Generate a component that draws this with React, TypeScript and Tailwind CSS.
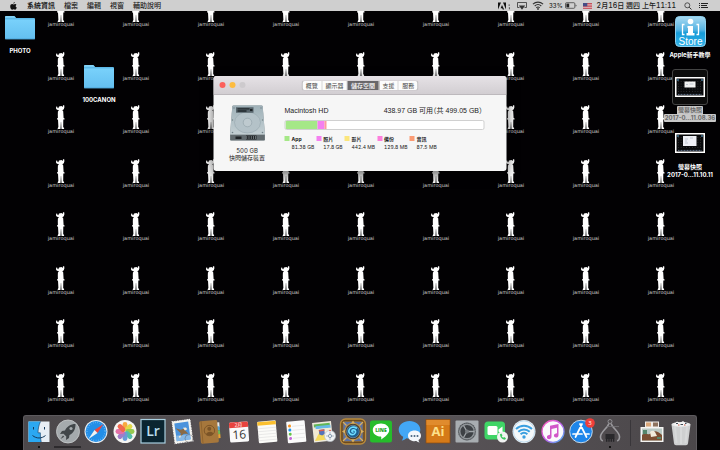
import type { ReactNode } from "react";

const menus = ["檔案", "編輯", "視窗", "輔助說明"];

const tabs = ["概覽", "顯示器", "儲存空間", "支援", "服務"];

const usage = [
  { name: "App", size: "81.38 GB", color: "bg-[#a5e887]" },
  { name: "照片", size: "17.8 GB", color: "bg-[#f480f0]" },
  { name: "影片", size: "442.4 MB", color: "bg-[#fbe67c]" },
  { name: "備份", size: "129.8 MB", color: "bg-[#fd7fdc]" },
  { name: "音訊", size: "87.5 MB", color: "bg-[#fb9c74]" },
];

/* WALLPAPER */

function Wallpaper() {
  return (
    <div
      aria-hidden="true"
      className="absolute inset-x-0 -top-[2px] grid h-[428px] grid-cols-[repeat(auto-fill,75px)] grid-rows-8 justify-center overflow-hidden"
    >
      {Array.from({ length: 72 }, (_, i) => (
        <div key={i} className="flex flex-col items-center">
          <svg viewBox="0 0 16 24" className="h-6 w-4" fill="#fff">
            <path d="M4.200 1.500 5.300 1.700 5.500 3.100 6.300 3.300 7 1.400 9.500 1.100 10.700 2 11 .300 12.200 .200 12.400 2.200 11.800 4.200 10.700 4.900 10.400 5.400 11.200 6.200 11.400 9.500 11.600 13 12.600 13.600 12.500 14.600 11.300 14.600 11.200 22 12.200 23.200 12 24H9.500L9.100 17 8.900 17 8.500 24H5.800L5.700 23.200 6.400 22 6 14.600 5 14.600 5 13.600 5.900 13 5.800 9.500 5.900 6.400 6.800 5.500 6.500 4.900 4.900 4.700 4 3.400Z" />
          </svg>
          <span className="pl-0.5 font-['DejaVu_Sans',sans-serif] text-[5px] leading-1 text-[#d0d0d0]">
            jamiroquai
          </span>
        </div>
      ))}
    </div>
  );
}

/* MENU BAR */

function AppleLogo() {
  return (
    <svg viewBox="0 0 16 18" className="h-2 w-[7px]" fill="#111">
      <path d="M11 0c.2 1.700-1.300 3.700-3.100 3.700C7.600 2 9.300.300 11 0ZM14.800 6.200c-2.800 1.700-2.300 5.200.700 6.400-.700 2-2.200 4.800-3.900 4.900-1.300 0-1.800-.8-3.300-.8s-2 .8-3.200.8C2.700 17.400.500 13.300.500 9.900c0-3.600 2.300-5.500 4.400-5.500 1.400 0 2.500.9 3.400.9.800 0 2.200-1 3.900-1 1 .1 2 .6 2.600 1.900Z" />
    </svg>
  );
}

function MenuBar() {
  return (
    <header className="relative flex h-[11px] items-center justify-between bg-[#cfcfcf] pr-[11px] pl-2.5 text-[7px] leading-[11px] text-[#1c1c1c] tabular-nums">
      <nav className="flex items-center gap-[9px]">
        <button aria-label="Apple" className="w-2">
          <AppleLogo />
        </button>
        <button className="font-bold">系統資訊</button>
        {menus.map((menu) => (
          <button key={menu} className="font-medium">
            {menu}
          </button>
        ))}
      </nav>
      <div className="flex items-center gap-[5px] font-medium">
        <svg viewBox="0 0 14 8" className="h-2 w-3.5" fill="#111">
          <path d="M0 .500h3L0 7.500ZM5 .500h3v7ZM4 3 6.200 7.500H4.700L4.200 6.200H2.600Z" />
          <path d="M10.500 2.500h1.400v1.200h-1.400ZM10.800 5.200h1.200v1.600l-1 1Z" opacity=".6" />
        </svg>
        <svg viewBox="0 0 10 8" className="h-2 w-2.5">
          <path d="M2.500 5.500H.500v-5h9v5h-2" fill="none" stroke="#333" strokeWidth=".8" />
          <path d="M5 7.800 8.200 3.600H1.800Z" fill="#333" />
        </svg>
        <svg viewBox="0 0 12 9" className="h-[9px] w-3" fill="none" stroke="#333" strokeWidth="1.1">
          <path d="M.900 3.200c3-2.800 7.200-2.800 10.200 0M2.700 5c2-1.800 4.600-1.800 6.600 0M4.300 6.700c1.100-.9 2.300-.9 3.400 0" />
          <circle cx="6" cy="7.900" r=".4" />
        </svg>
        <span className="-mr-[3px] text-[6px]">33%</span>
        <svg viewBox="0 0 12 7" className="h-[7px] w-3">
          <rect x=".5" y=".7" width="9.300" height="5.600" rx="1" fill="none" stroke="#333" strokeWidth=".7" />
          <path d="M1.400 1.600h2.800v3.800H1.400Z" fill="#222" />
          <path d="M10.600 2.400c1.200.2 1.200 2 0 2.200Z" fill="#333" />
        </svg>
        <svg viewBox="0 0 9 6" className="ml-px h-1.5 w-[9px]">
          <path d="M0 0h9v6H0Z" fill="#e9c9cc" />
          <path d="M0 .5h9M0 2.100h9M0 3.700h9M0 5.400h9" stroke="#c0434e" strokeWidth=".9" />
          <path d="M0 0h4.300v3.300H0Z" fill="#454c85" />
        </svg>
        <span>2月16日 週四 上午11:11</span>
        <button aria-label="Spotlight" className="ml-[3px]">
          <svg viewBox="0 0 8 8" className="size-2" fill="none" stroke="#333">
            <circle cx="3.300" cy="3.300" r="2.500" strokeWidth=".8" />
            <path d="m5.200 5.200 2.300 2.300" />
          </svg>
        </button>
        <button aria-label="通知中心" className="ml-0.5">
          <svg viewBox="0 0 10 7" className="h-[7px] w-2.5" stroke="#222">
            <path d="M0 1.500h1M2 1.500h7M0 3.500h1M2 3.500h6M0 5.500h1M2 5.500h7" />
          </svg>
        </button>
      </div>
    </header>
  );
}

/* DESKTOP ITEMS */

function Folder() {
  return (
    <svg viewBox="0 0 30 24" className="h-6 w-[30px]">
      <defs>
        <linearGradient id="folder" x1="0" y1="0" x2="0" y2="1">
          <stop offset="0" stopColor="#79d1fb" />
          <stop offset="1" stopColor="#63bff0" />
        </linearGradient>
      </defs>
      <path d="M0 1.200Q0 0 1.200 0H8.500Q9.500 0 10.300 1L11 2H29q1 0 1 1v3H0Z" fill="#5db9e8" />
      <path d="M0 1.200Q0 0 1.200 0H8.500Q9.500 0 10.300 1L11 1.800H0Z" fill="#84d3f7" />
      <path d="M0 3.500H30V22.500q0 .7-.7.700H.700Q0 23.200 0 22.500Z" fill="url(#folder)" />
      <path d="M0 22.800H30" stroke="#4aa5d8" strokeWidth=".7" />
    </svg>
  );
}

function StoreIcon() {
  return (
    <svg viewBox="0 0 31 31" className="size-[31px]">
      <defs>
        <linearGradient id="store" x1="0" y1="0" x2="0" y2="1">
          <stop offset="0" stopColor="#a8daf2" />
          <stop offset=".45" stopColor="#55b3e2" />
          <stop offset=".55" stopColor="#159bd8" />
          <stop offset="1" stopColor="#35b3e8" />
        </linearGradient>
      </defs>
      <rect x=".5" y=".5" width="30" height="30" rx="4" fill="url(#store)" stroke="#8fd0ee" />
      <circle cx="15.500" cy="5.500" r="2.800" fill="#fff" />
      <path d="M12.500 10H18V17h1.500v2.500H11.500V17H13V12h-.5Z" fill="#fff" />
      <path d="M9.500 8.500H7.500v10h2M21.500 8.500h2v10h-2" fill="none" stroke="#fff" strokeWidth="1.300" />
      <text x="15.500" y="28.500" fontSize="10" fontWeight="400" textAnchor="middle" fill="#fff" className="font-['Liberation_Sans',sans-serif]">
        Store
      </text>
    </svg>
  );
}

function Screenshot({ menu = false }: { menu?: boolean }) {
  return (
    <svg viewBox="0 0 30 20" className="h-5 w-[30px]">
      <rect width="30" height="20" fill="#fff" />
      <rect x="1.500" y="1.500" width="27" height="17" fill="#08090b" />
      <path d="M3 4.500h24M3 7h24M3 9.500h24M3 12h24M3 14.500h24" stroke="#666" strokeWidth=".6" strokeDasharray=".6 2.200" />
      <path d="M3 17.400h24" stroke="#63758c" strokeWidth="1" strokeDasharray="1 .5" />
      <path d="M2 3h2M26 3h2" stroke="#5aa9d6" />
      {menu ? (
        <path d="M8 3h13.500v10H8Z" fill="#eef0f6" />
      ) : (
        <path d="M9.500 4.500h11v6h-11Z" fill="#f3f3f3" />
      )}
      <path d={menu ? "M10 6h3M10 8h2M10 10h3M15 5h3" : "M11 7.500h2M14.500 7h4"} stroke="#b6bccb" strokeWidth=".8" />
    </svg>
  );
}

function DesktopItem({ className, icon, children }: { className: string; icon: ReactNode; children: ReactNode }) {
  return (
    <button
      className={`absolute flex w-14 flex-col items-center text-[6px] leading-2 font-bold whitespace-nowrap text-white ${className}`}
    >
      {icon}
      {children}
    </button>
  );
}

/* STORAGE WINDOW */

function HardDisk() {
  return (
    <svg viewBox="0 0 36 36" className="size-9">
      <defs>
        <linearGradient id="disk" x1="0" y1="0" x2="0" y2="1">
          <stop offset="0" stopColor="#9fb1b8" />
          <stop offset="1" stopColor="#c3cfd3" />
        </linearGradient>
      </defs>
      <path d="M4 .500H32q1 0 1.200 1L35.500 30v4.500q0 1.300-1.300 1.300H1.800Q.500 35.800.500 34.500V30L2.800 1.500Q3 .5 4 .5Z" fill="#7d878b" />
      <path d="M4 .500H32q1 0 1.200 1L35.500 29.500H.500L2.800 1.500Q3 .5 4 .5Z" fill="url(#disk)" />
      <ellipse cx="18" cy="17.500" rx="13" ry="10.500" fill="#b4c2c8" stroke="#93a3aa" strokeWidth=".5" />
      <circle cx="18" cy="17.500" r="4.300" fill="#becacf" stroke="#8e9fa6" strokeWidth=".6" />
      <path d="M6.500 2.300H24V7.800H6.500Z" fill="#56636a" />
      <path d="M8 3.800H20M8 6H17" stroke="#20282c" strokeWidth="1.300" />
      <path d="M20.500 4h2.500v2h-2.500Z" fill="#1c2226" />
      <g fill="#718087">
        <circle cx="4.500" cy="3" r=".7" />
        <circle cx="31.500" cy="3" r=".7" />
        <circle cx="3" cy="15" r=".7" />
        <circle cx="33" cy="15" r=".7" />
        <circle cx="3" cy="27.500" r=".8" />
        <circle cx="33" cy="27.500" r=".8" />
      </g>
      <path d="M1 30h34v5H1Z" fill="#626b6f" />
      <path d="M6 31.500h6v2.500H6ZM16.500 30.500H27v4H16.500Z" fill="#202427" />
      <path d="M17 32.500h9.500" stroke="#9aa3a7" strokeWidth="3" strokeDasharray=".6 1.600" />
    </svg>
  );
}

function StorageWindow() {
  return (
    <section
      aria-label="儲存空間"
      className="absolute top-[65px] left-1/2 w-[293px] -translate-x-1/2 overflow-hidden rounded-[3px] bg-[#f6f6f6] text-[#222] tabular-nums shadow-[0_4px_12px_rgba(0,0,0,0.6)]"
    >
      <div className="relative flex h-[19px] items-center justify-center border-b border-[#bdb9bd] bg-linear-to-b from-[#e6e2e6] to-[#d2ced2]">
        <div className="absolute left-1.5 flex gap-1">
          <button aria-label="關閉" className="size-1.5 rounded-full bg-[#fc605b]" />
          <button aria-label="縮到最小" className="size-1.5 rounded-full bg-[#fdbc40]" />
          <button aria-label="縮放" disabled className="size-1.5 rounded-full bg-[#cdcacd]" />
        </div>
        <div className="flex w-[115px] divide-x divide-[#d5d5d5] overflow-hidden rounded-[2px] bg-[#fcfcfc] text-[6px] leading-[9px] shadow-[0_0_1px_#999]">
          {tabs.map((tab) => (
            <button
              key={tab}
              className={`flex-auto ${tab === "儲存空間" ? "bg-[#69676a] font-medium text-white" : "text-[#444]"}`}
            >
              {tab}
            </button>
          ))}
        </div>
      </div>

      <div className="flex gap-[18px] pt-2.5 pr-[22px] pb-2.5 pl-3.5">
        <div className="flex w-[39px] flex-col items-center text-[6px] leading-[7px] whitespace-nowrap">
          <HardDisk />
          <span className="mt-1.5">500 GB</span>
          <span>快閃儲存裝置</span>
        </div>

        <div className="flex-1">
          <div className="flex justify-between pr-0.5 font-['Liberation_Sans','Noto_Sans_CJK_TC',sans-serif] text-[7px] leading-3">
            <h1>Macintosh HD</h1>
            <p className="[font-feature-settings:'halt']">438.97 GB 可用（共 499.05 GB）</p>
          </div>
          <div className="mt-[3px] flex h-2.5 overflow-hidden rounded-[2px] border border-[#d0d0d0] bg-white">
            <div className="bg-[#a5e887]" style={{ width: "16.300%" }} />
            <div className="bg-[#f480f0]" style={{ width: "3.600%" }} />
            <div className="bg-[#fb9c9c]" style={{ width: "0.600%" }} />
          </div>
          <ul className="mt-[5px] flex gap-0.5 text-[5px] leading-2">
            {usage.map((item) => (
              <li key={item.name} className="flex gap-0.5">
                <span className={`mt-px size-[5px] ${item.color}`} />
                <div>
                  <p className="font-bold">{item.name}</p>
                  <p>{item.size}</p>
                </div>
              </li>
            ))}
          </ul>
        </div>
      </div>
    </section>
  );
}

/* DOCK */

const dockApps: { name: string; icon: ReactNode; running?: boolean }[] = [
  {
    name: "Finder",
    running: true,
    icon: (
      <>
        <path d="M3.500 3.500h21v20.500h-21Z" fill="#e7eef5" />
        <path d="M3.500 3.500H15.500C13.800 7 13 11 13 14.800h2.300c0 3.500.2 6.500.9 9.200H3.500Z" fill="#2ba8f2" />
        <path d="M15.500 3.500C13.800 7 13 11 13 14.800h2.300c0 3.500.2 6.500.9 9.200" fill="none" stroke="#1d4c77" strokeWidth=".7" />
        <path d="M8.500 9v2.500M19.500 9v2.500M7.500 17.500c4 3.300 9 3.300 13 0" fill="none" stroke="#153a5c" strokeWidth="1" />
      </>
    ),
  },
  {
    name: "Launchpad",
    icon: (
      <>
        <circle cx="14" cy="13.500" r="11.500" fill="#a5aaad" stroke="#c9cccd" strokeWidth=".8" />
        <path d="M21.500 6c-5 0-8.500 2.500-10.500 6.500L8 13l-2 3 3.500-.3 2.800 2.800L12 22l3-2 .5-3C19.500 15 21.700 11 21.500 6ZM9 17.500 6.500 21l3.700-2.300Z" fill="#414649" />
        <circle cx="17" cy="10.500" r="1.600" fill="#a5aaad" />
      </>
    ),
  },
  {
    name: "Safari",
    icon: (
      <>
        <circle cx="14" cy="13.500" r="11.500" fill="#e9edf0" />
        <circle cx="14" cy="13.500" r="10.500" fill="#238fe8" />
        <circle cx="14" cy="13.500" r="9" fill="none" stroke="#9bd0f7" strokeWidth="1.300" strokeDasharray=".4 1.900" />
        <path d="m21.500 6-6 9-3-3Z" fill="#f0443b" />
        <path d="m6.500 21 6-9 3 3Z" fill="#f2f2f2" />
      </>
    ),
  },
  {
    name: "照片",
    icon: (
      <>
        <circle cx="14" cy="13.500" r="11.500" fill="#f5f5f3" />
        <g opacity=".9">
          <rect x="11.600" y="4" width="4.800" height="9" rx="2.400" fill="#f9a12c" />
          <rect x="11.600" y="4" width="4.800" height="9" rx="2.400" fill="#e2d638" transform="rotate(45 14 13.500)" />
          <rect x="11.600" y="4" width="4.800" height="9" rx="2.400" fill="#8cc63f" transform="rotate(90 14 13.500)" />
          <rect x="11.600" y="4" width="4.800" height="9" rx="2.400" fill="#43b9a2" transform="rotate(135 14 13.500)" />
          <rect x="11.600" y="4" width="4.800" height="9" rx="2.400" fill="#5b93d6" transform="rotate(180 14 13.500)" />
          <rect x="11.600" y="4" width="4.800" height="9" rx="2.400" fill="#9771c4" transform="rotate(225 14 13.500)" />
          <rect x="11.600" y="4" width="4.800" height="9" rx="2.400" fill="#e0629f" transform="rotate(270 14 13.500)" />
          <rect x="11.600" y="4" width="4.800" height="9" rx="2.400" fill="#f0593e" transform="rotate(315 14 13.500)" />
        </g>
      </>
    ),
  },
  {
    name: "Lightroom",
    icon: (
      <>
        <rect x="2" y="1.500" width="24" height="23.500" fill="#0b2531" stroke="#a9cfe0" strokeWidth="1.200" />
        <text x="14" y="18" fontSize="14" fontWeight="600" textAnchor="middle" fill="#b9deee">
          Lr
        </text>
      </>
    ),
  },
  {
    name: "Mail",
    icon: (
      <>
        <g transform="rotate(-8 14 13.500)">
          <rect x="5.500" y="2.500" width="18" height="22" fill="#f3f3ee" stroke="#fff" strokeWidth="1" strokeDasharray="1 .7" />
          <path d="M7.500 4.500h14v18h-14Z" fill="#4b93dc" />
          <path d="M7.500 17h14v5.500h-14Z" fill="#86b8e6" />
          <path d="m8 9.500 5 2 3-.5 4 5.500-4.500-.5-4 2.500 1-3.500Z" fill="#8a6a45" />
          <path d="m15.500 10 3 0 1 2-2.500 1ZM10 18l3-1-2 3Z" fill="#f2ead8" />
        </g>
        <circle cx="21" cy="20.500" r="4" fill="none" stroke="#4c4a4f" strokeWidth="1" opacity=".4" />
      </>
    ),
  },
  {
    name: "通訊錄",
    icon: (
      <g transform="rotate(-5 14 13.500)">
        <path d="M20 5h4v5h-4Z" fill="#e8e8e8" />
        <path d="M20 9h4v4h-4Z" fill="#54a7dc" />
        <path d="M20 13h4v4h-4Z" fill="#70bb54" />
        <path d="M20 17h4v4h-4Z" fill="#e6a535" />
        <rect x="4" y="2.500" width="18" height="22.500" rx="1.500" fill="#a6773c" />
        <path d="M6 2.500v22.500" stroke="#8a5f2c" strokeWidth=".8" />
        <circle cx="13.500" cy="12.500" r="5.200" fill="none" stroke="#7b5427" strokeWidth=".9" />
        <circle cx="13.500" cy="10.800" r="2" fill="#7b5427" />
        <path d="M9.800 16c1-3 6.400-3 7.400 0-2 2.200-5.400 2.200-7.400 0Z" fill="#7b5427" />
      </g>
    ),
  },
  {
    name: "行事曆",
    icon: (
      <g transform="rotate(-4 14 13.500)">
        <rect x="4.500" y="4" width="19" height="20" rx="1.500" fill="#fafafa" />
        <path d="M4.500 9.500V5.500Q4.500 4 6 4H22q1.500 0 1.500 1.500v4Z" fill="#e8433e" />
        <text x="14" y="8.700" fontSize="5" textAnchor="middle" fill="#fff">
          2月
        </text>
        <text x="14" y="20.800" fontSize="12" textAnchor="middle" fill="#333">
          16
        </text>
      </g>
    ),
  },
  {
    name: "備忘錄",
    icon: (
      <g transform="rotate(-5 14 13.500)">
        <rect x="5" y="3" width="18.500" height="21.500" rx="1" fill="#fbfbf8" />
        <path d="M5 7V3.500h18.500V7Z" fill="#fbc02f" />
        <path d="M5 10h18.500M5 13h18.500M5 16h18.500M5 19h18.500M5 22h18.500" stroke="#ddd" strokeWidth=".6" />
      </g>
    ),
  },
  {
    name: "提醒事項",
    icon: (
      <g transform="rotate(-5 14 13.500)">
        <rect x="5" y="3" width="18.500" height="21.500" rx="1" fill="#fbfbfb" />
        <path d="M10.500 8h12M10.500 12h12M10.500 16h12M10.500 20h12" stroke="#ddd" strokeWidth=".6" />
        <circle cx="8" cy="7.500" r="1.500" fill="#f8931f" />
        <circle cx="8" cy="11.500" r="1.500" fill="#2196f3" />
        <circle cx="8" cy="15.700" r="1.500" fill="#63c446" />
        <circle cx="8" cy="20" r="1.500" fill="#c368d8" />
      </g>
    ),
  },
  {
    name: "地圖",
    icon: (
      <>
        <g transform="rotate(-6 13 13.500)">
          <rect x="3" y="4" width="19" height="19.500" fill="#eeeadd" />
          <path d="M4.500 5.500h16v3h-16Z" fill="#62b657" />
          <path d="M6 7.500h15v3H6Z" fill="#68b9e8" />
          <path d="M4 10.500h16v11.500H4Z" fill="#f3ead2" />
          <path d="m4 22 6-9 9 9Z" fill="#f5d95a" />
          <path d="M9 11.500h5.500v4.500l-2.700 1.500L9 16Z" fill="#5673b9" />
          <path d="M9 11.500h5.500V13H9Z" fill="#d95d4f" />
        </g>
        <circle cx="20" cy="18" r="5.500" fill="#f2f4f6" stroke="#b9c1c8" strokeWidth=".7" />
        <path d="M20 14v2M20 20v2M16 18h2M22 18h2" stroke="#8796a4" strokeWidth=".6" />
        <circle cx="20" cy="18" r="1.600" fill="none" stroke="#6d86a0" strokeWidth=".8" />
        <circle cx="20" cy="12.500" r=".8" fill="#e6503f" />
      </>
    ),
  },
  {
    name: "Hearthstone",
    icon: (
      <>
        <rect x="1.500" y="1" width="25" height="25" rx="5" fill="#6b4a1f" stroke="#b98a3c" strokeWidth="1.400" />
        <rect x="4" y="3.500" width="20" height="20" rx="2" fill="#5a72a8" stroke="#8a6a35" strokeWidth=".8" />
        <circle cx="14" cy="13.500" r="8.300" fill="#4b3c28" stroke="#b98f49" strokeWidth="1.300" />
        <path d="m14 2.500 2 3h-4ZM14 24.500l2-3h-4ZM3 13.500l3-2v4ZM25 13.500l-3-2v4Z" fill="#d9b061" />
        <circle cx="14" cy="13.500" r="6.300" fill="#1d5f90" stroke="#8aa0b0" strokeWidth=".6" />
        <path d="M14 14c-1.500 0-1.500-2 .3-2.200 2.500-.2 3.300 3.200.7 4.400-3.200 1.300-6-1.500-5-4.200 1-2.900 4.800-3.700 7.300-2" fill="none" stroke="#6fdcff" strokeWidth="1.700" strokeLinecap="round" />
        <path d="m4 4 3.500 3.500M24 4l-3.500 3.500M4 23l3.500-3.500M24 23l-3.500-3.500" stroke="#d9b061" strokeWidth="1.300" />
      </>
    ),
  },
  {
    name: "LINE",
    icon: (
      <>
        <rect x="3" y="2.500" width="22" height="22" rx="2.500" fill="#26bd2b" />
        <path d="M14 5.500c4.700 0 8.200 2.900 8.200 6.500 0 3.800-4.500 7-8 9.500.2-1.500.2-2.700-.4-2.900C9 18.300 5.800 15.700 5.800 12c0-3.600 3.500-6.500 8.200-6.500Z" fill="#fff" />
        <text x="14" y="13.800" fontSize="5" fontWeight="800" textAnchor="middle" fill="#26a52b">
          LINE
        </text>
      </>
    ),
  },
  {
    name: "訊息",
    icon: (
      <>
        <path d="M13.500 3c6 0 10.800 3.800 10.800 8.800s-4.800 8.800-10.800 8.800c-1 0-2-.1-3-.3-1.200 1.200-3 2-4.800 2.200.9-1 1.500-2.400 1.400-3.700C4.400 17.200 2.700 14.600 2.700 11.800 2.700 6.800 7.500 3 13.500 3Z" fill="#43a7f5" />
        <path d="M18.500 12.500c3.800 0 6.500 2.200 6.500 5.200 0 1.800-1 3.300-2.500 4.200 0 1 .4 2 1.200 2.700-1.300-.1-2.500-.6-3.400-1.500-5 .8-8.300-2-8.300-5.400 0-3 2.700-5.200 6.500-5.200Z" fill="#f3f7fb" />
        <g fill="#48647f">
          <circle cx="15.500" cy="18" r="1" />
          <circle cx="18.500" cy="18" r="1" />
          <circle cx="21.500" cy="18" r="1" />
        </g>
      </>
    ),
  },
  {
    name: "Illustrator",
    icon: (
      <>
        <rect x="2" y="1.500" width="24" height="23.500" fill="#d57a18" stroke="#8c4b10" strokeWidth=".7" />
        <path d="M2.500 2h23v5h-23Z" fill="#e08b2d" />
        <text x="14" y="18" fontSize="13" fontWeight="700" textAnchor="middle" fill="#fde08a">
          Ai
        </text>
      </>
    ),
  },
  {
    name: "系統偏好設定",
    icon: (
      <>
        <rect x="2.500" y="2.500" width="23" height="22" rx="1" fill="#a8adb1" />
        <circle cx="14" cy="13.500" r="9" fill="#3d4145" />
        <circle cx="14" cy="13.500" r="7.300" fill="none" stroke="#8f9498" strokeWidth="1.500" />
        <circle cx="14" cy="13.500" r="8.600" fill="none" stroke="#8f9498" strokeWidth="1" strokeDasharray="1 1" />
        <path d="M14 13.500h7M14 13.500l-3.500-6M14 13.500l-3.500 6" stroke="#a0a5a9" strokeWidth="1.300" />
        <circle cx="14" cy="13.500" r="2" fill="#777c80" />
      </>
    ),
  },
  {
    name: "FaceTime",
    icon: (
      <>
        <rect x="2.500" y="3.500" width="20.500" height="18" rx="3.500" fill="#3fd566" />
        <rect x="5.500" y="8" width="10" height="9" rx="1.500" fill="#fff" />
        <path d="m16.500 11.500 4-3v8l-4-3Z" fill="#fff" />
        <circle cx="20.500" cy="19" r="5.500" fill="#f1f3f2" />
        <path d="M18 16.300c0 3 2.300 5.300 5 5.400l1-1.400-1.900-1.200-.9.700c-.8-.4-1.200-1-1.400-1.600l.7-.9-1.200-1.800Z" fill="#3cc860" />
      </>
    ),
  },
  {
    name: "AirPort 工具程式",
    icon: (
      <>
        <circle cx="14" cy="13.500" r="11.500" fill="#e9eff3" />
        <circle cx="14" cy="13.500" r="10.600" fill="#f4f8fa" stroke="#8fc3e6" strokeWidth=".5" />
        <path d="M6 11c4.600-4.500 11.400-4.500 16 0M8.300 13.700c3.300-3.100 8.100-3.100 11.400 0M10.600 16.300c2-1.800 4.800-1.800 6.800 0" fill="none" stroke="#3a9fe0" strokeWidth="2" />
        <circle cx="14" cy="19" r="1.700" fill="#3a9fe0" />
      </>
    ),
  },
  {
    name: "iTunes",
    icon: (
      <>
        <defs>
          <linearGradient id="itunes" x1="0" y1="0" x2="1" y2="1">
            <stop offset="0" stopColor="#fb5bb5" />
            <stop offset=".5" stopColor="#c25ce8" />
            <stop offset="1" stopColor="#3fb6f2" />
          </linearGradient>
        </defs>
        <circle cx="14" cy="13.500" r="11" fill="#fafafc" stroke="url(#itunes)" strokeWidth="1.300" />
        <path d="M11 7.800 19.500 6v11c0 3.400-4.600 3.200-4.600.6 0-1.700 1.500-2.100 3.100-2.400V9.700l-5.500 1.200v7.700c0 3.400-4.600 3.200-4.600.6 0-1.700 1.500-2.100 3.100-2.400Z" fill="#d256c9" />
      </>
    ),
  },
  {
    name: "App Store",
    icon: (
      <>
        <circle cx="14" cy="13.500" r="11.300" fill="#1e86ea" stroke="#d5e2ec" strokeWidth=".9" />
        <path d="m15 6-6.500 13M13 6l6.500 13M6 16h9M18 16h4" stroke="#fff" strokeWidth="1.700" strokeLinecap="round" />
        <circle cx="23" cy="5" r="4.800" fill="#ef3e3a" />
        <text x="23" y="7.200" fontSize="6" textAnchor="middle" fill="#fff">
          3
        </text>
      </>
    ),
  },
  {
    name: "系統資訊",
    running: true,
    icon: (
      <>
        <circle cx="14" cy="3.500" r="2" fill="none" stroke="#908f93" strokeWidth="1" />
        <path d="M13 5.500C11 11 4 14 4.500 19.500c0 1.800.8 2.800 2.300 3.500M15 5.500c2 5.500 9 8.500 8.500 14 0 1.800-.8 2.800-2.300 3.500" fill="none" stroke="#9b9a9e" strokeWidth="1.600" />
        <path d="M10.500 8.500h7M18 8.500h5" stroke="#77767a" strokeWidth=".8" />
        <path d="M9.500 16h9v5h-9Z" fill="#29282b" />
        <path d="M10 22.300h8.500" stroke="#252427" strokeWidth="3" strokeDasharray="1.400 .9" />
      </>
    ),
  },
];

const dockPlaces: { name: string; icon: ReactNode }[] = [
  {
    name: "下載項目",
    icon: (
      <>
        <path d="M7 1.500h14v8H7Z" fill="#efece8" />
        <path d="M8 2.500h5v4H8Z" fill="#d9a77a" />
        <path d="M15 2.500h5v4h-5Z" fill="#8d725e" />
        <path d="M2.500 7h23v15h-23Z" fill="#f4f4f2" />
        <path d="M4 8.500h20v12H4Z" fill="#b9c9c4" />
        <path d="M4 15c4-3 6 1 9-2s7-2 11 2v5.500H4Z" fill="#7b4f33" />
        <path d="M12 12c2-2 4-1 5 0l2 4-6 1Z" fill="#f0ebdc" />
        <path d="M5 10h4v4H5ZM19 17h4v2h-4Z" fill="#55866b" />
      </>
    ),
  },
  {
    name: "垃圾桶",
    icon: (
      <>
        <path d="M4.500 4.500h19l-2.500 19q-.2 1.800-2 1.800H9q-1.800 0-2-1.800Z" fill="#cfd0d1" />
        <path d="M8 6.500 9.500 23M14 7v17M20 6.500 18.500 23" stroke="#d8d9da" strokeWidth="2" />
        <ellipse cx="14" cy="4.500" rx="9.500" ry="2.500" fill="#e8e8e9" />
        <path d="m7 4 3-2.500 3 1.500 3-2 3 2.500 2 1-2 1.300H8Z" fill="#f5f5f5" />
        <path d="M9 3.500h2M13.500 4.500h2.500M18 3.500h1.500" stroke="#414a55" />
        <path d="M11 5h1.500M17 5h1.500" stroke="#c85745" />
      </>
    ),
  },
];

function DockIcon({ name, children }: { name: string; children: ReactNode }) {
  return (
    <button aria-label={name} className="block">
      <svg viewBox="0 0 28 28" className="size-7 font-['Open_Sans','Noto_Sans_CJK_TC',sans-serif]">
        {children}
      </svg>
    </button>
  );
}

function Dock() {
  return (
    <nav
      aria-label="Dock"
      className="relative mx-[23px] flex h-[35px] rounded-t-[3px] border border-b-0 border-[#5d5a5e] bg-linear-to-r from-[#4b474a] via-[#5b565a] to-[#4b474a] px-px pt-0.5"
    >
      <ul className="flex flex-21">
        {dockApps.map((app) => (
          <li key={app.name} className="flex flex-1 flex-col items-center">
            <DockIcon name={app.name}>{app.icon}</DockIcon>
            {app.running && <span className="size-0.5 rounded-full bg-black" />}
            {app.name === "Launchpad" && <span className="h-0.5 w-[27px] bg-[#2d2a2d]" />}
          </li>
        ))}
      </ul>
      <div className="flex w-3.5 justify-center pt-0.5">
        <span className="h-[26px] w-px bg-[#39363a]" />
      </div>
      <ul className="flex flex-2">
        {dockPlaces.map((place) => (
          <li key={place.name} className="flex flex-1 justify-center">
            <DockIcon name={place.name}>{place.icon}</DockIcon>
          </li>
        ))}
      </ul>
    </nav>
  );
}

export default function App() {
  return (
    <div
      lang="zh-Hant"
      className="relative flex min-h-screen flex-col overflow-hidden bg-[#020103] font-[Inter,'Noto_Sans_CJK_TC',sans-serif]"
    >
      <Wallpaper />
      <MenuBar />

      <main className="relative flex-1">
        <DesktopItem className="top-[5px] -left-2" icon={<Folder />}>
          <span className="mt-[7px]">PHOTO</span>
        </DesktopItem>
        <DesktopItem className="top-[54px] left-[71px]" icon={<Folder />}>
          <span className="mt-[7px]">100CANON</span>
        </DesktopItem>
        <DesktopItem className="top-[5px] right-[2px]" icon={<StoreIcon />}>
          <span className="mt-1">Apple新手教學</span>
        </DesktopItem>
        <DesktopItem
          className="top-[58px] right-[2px]"
          icon={
            <span className="flex size-9 items-center justify-center rounded-[3px] border border-[#444] bg-[#0c0c0c]">
              <Screenshot />
            </span>
          }
        >
          <span className="mt-px rounded-t-[1px] bg-[#c8c8c8] px-px text-[#6a6a6a]">螢幕快照</span>
          <span className="rounded-[1px] bg-[#c8c8c8] px-px text-[#6a6a6a]">2017-0...11.08.36</span>
        </DesktopItem>
        <DesktopItem className="top-[122px] right-[2px]" icon={<Screenshot menu />}>
          <span className="mt-2.5">螢幕快照</span>
          <span>2017-0...11.10.11</span>
        </DesktopItem>

        <StorageWindow />
      </main>

      <Dock />
    </div>
  );
}
